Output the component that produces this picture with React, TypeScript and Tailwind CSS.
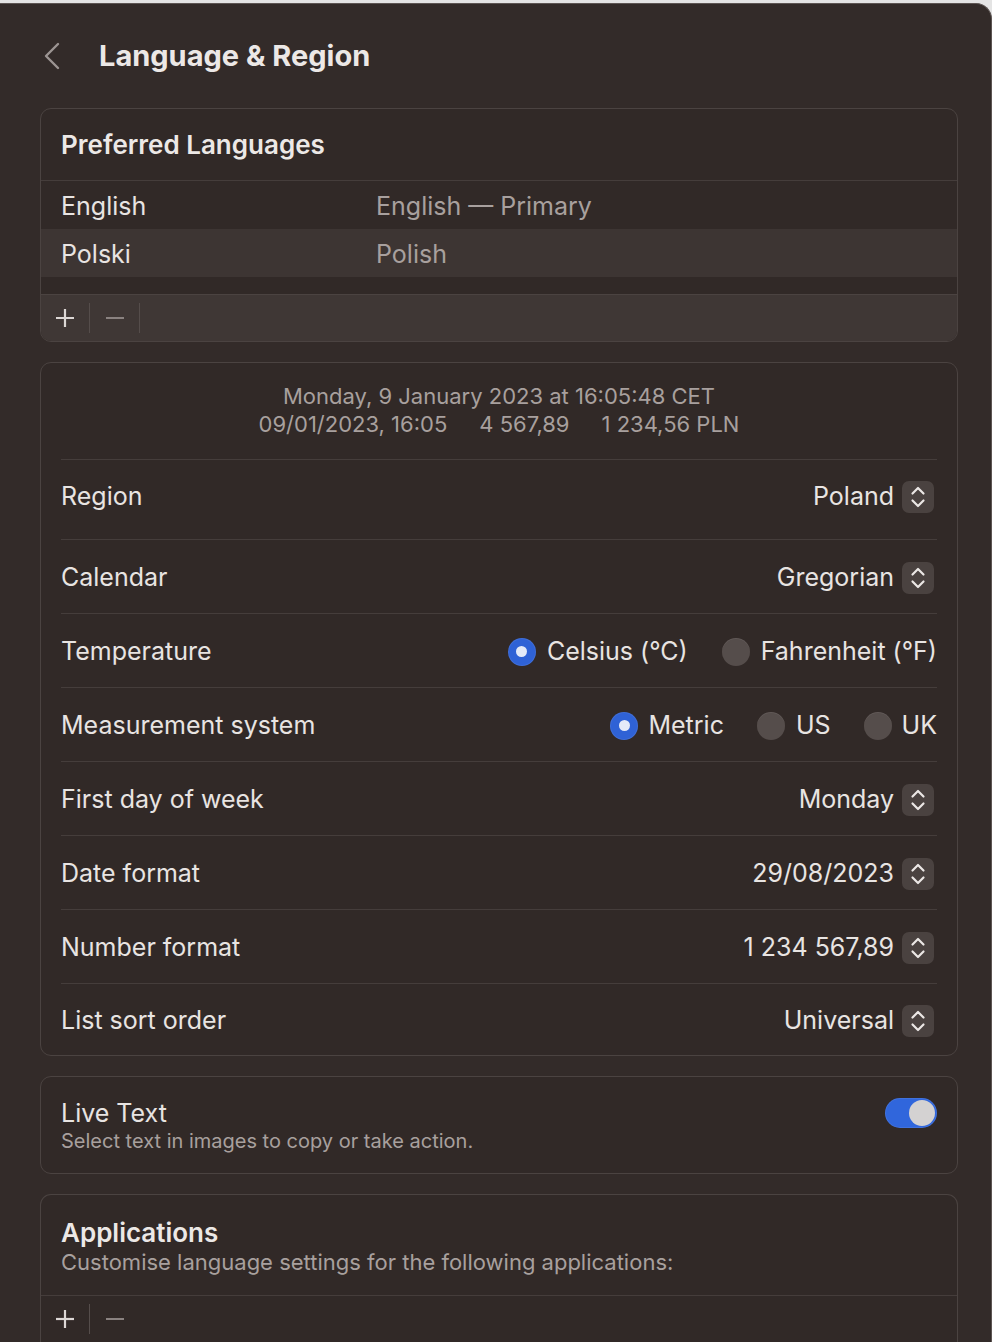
import React from "react";

const font = { fontFamily: "Inter, 'Noto Sans', sans-serif" };

function Stepper() {
  return (
    <div className="flex h-[32px] w-[32px] items-center justify-center rounded-[7px] bg-[#4a4240]">
      <svg width="16" height="26" viewBox="0 0 16 26" fill="none" stroke="#ebe7e5" strokeWidth="2.2" strokeLinecap="round" strokeLinejoin="round" aria-hidden="true">
        <polyline points="2.5 9.5 8 4 13.5 9.5" />
        <polyline points="2.5 16.5 8 22 13.5 16.5" />
      </svg>
    </div>
  );
}

function Radio({ checked }: { checked?: boolean }) {
  return checked ? (
    <span className="flex h-[28px] w-[28px] shrink-0 items-center justify-center rounded-full bg-[#2f62d6] shadow-[inset_0_0_0_1px_rgba(255,255,255,0.08)]">
      <span className="h-[11px] w-[11px] rounded-full bg-[#e4eaf8]" />
    </span>
  ) : (
    <span className="block h-[28px] w-[28px] shrink-0 rounded-full bg-[#554d4b] shadow-[inset_0_1px_0_rgba(255,255,255,0.07)]" />
  );
}

function PlusMinus({ second }: { second?: boolean }) {
  return (
    <div className="flex h-[46px] items-center">
      <button type="button" className="flex h-full w-[48px] items-center justify-center text-[#dcd7d5]">
        <svg width="20" height="20" viewBox="0 0 20 20" stroke="currentColor" strokeWidth="2.2" aria-hidden="true">
          <line x1="10" y1="1" x2="10" y2="19" />
          <line x1="1" y1="10" x2="19" y2="10" />
        </svg>
      </button>
      <div className="h-[30px] w-px bg-[#554d4b]" />
      <button type="button" className="flex h-full w-[49px] items-center justify-center text-[#8a8280]">
        <svg width="20" height="20" viewBox="0 0 20 20" stroke="currentColor" strokeWidth="2" aria-hidden="true">
          <line x1="1" y1="10" x2="19" y2="10" />
        </svg>
      </button>
      {second ? <div className="h-[30px] w-px bg-[#554d4b]" /> : null}
    </div>
  );
}

function SelectRow({ label, value, first }: { label: string; value: string; first?: boolean }) {
  return (
    <div className={`flex items-center justify-between border-t border-[#453d3b] ${first ? "h-[80px] pb-[6px]" : "h-[74px] pt-[2px]"}`}>
      <span className="text-[25px] text-[#e8e4e2]">{label}</span>
      <div className="flex items-center gap-[8px] pr-[3px]">
        <span className="text-[25px] text-[#e8e4e2]">{value}</span>
        <Stepper />
      </div>
    </div>
  );
}

export default function App() {
  return (
    <div className="h-[1342px] w-[992px] overflow-hidden bg-[#e4e4e4] pt-[3px]" style={font}>
      <div className="h-full rounded-tr-[16px] border-t border-r border-[#5d5553] bg-[#332b29] pl-[40px] pr-[33px]">
        {/* header */}
        <div className="flex h-[104px] items-center">
          <svg className="ml-[3px]" width="18" height="30" viewBox="0 0 18 30" fill="none" stroke="#9c9492" strokeWidth="2.4" strokeLinecap="round" strokeLinejoin="round" aria-hidden="true">
            <polyline points="15 3 3 15 15 27" />
          </svg>
          <h1 className="ml-[38px] text-[29px] font-bold text-[#ece8e6]">Language &amp; Region</h1>
        </div>

        {/* preferred languages */}
        <div className="overflow-hidden rounded-[11px] border border-[#4b4341] bg-[#312927]">
          <div className="flex h-[72px] items-center border-b border-[#453d3b] px-[20px]">
            <span className="text-[26px] font-semibold text-[#ece8e6]">Preferred Languages</span>
          </div>
          <div className="flex h-[48px] items-center px-[20px] pt-[3px] text-[25px]">
            <span className="w-[315px] text-[#e8e4e2]">English</span>
            <span className="text-[#a8a09e]">English — Primary</span>
          </div>
          <div className="flex h-[48px] items-center bg-[#3d3533] px-[20px] pt-[3px] text-[25px]">
            <span className="w-[315px] text-[#e8e4e2]">Polski</span>
            <span className="text-[#a8a09e]">Polish</span>
          </div>
          <div className="h-[17px]" />
          <div className="border-t border-[#4b4341] bg-[#3f3735]">
            <PlusMinus second />
          </div>
        </div>

        {/* region settings */}
        <div className="mt-[20px] rounded-[11px] border border-[#4b4341] bg-[#312927] px-[20px]">
          <div className="flex h-[96px] flex-col items-center justify-center pb-[2px] text-[22px] leading-[28px] text-[#a8a09e]">
            <span>Monday, 9 January 2023 at 16:05:48 CET</span>
            <div className="flex gap-[32px]">
              <span>09/01/2023, 16:05</span>
              <span>4 567,89</span>
              <span>1 234,56 PLN</span>
            </div>
          </div>
          <SelectRow first label="Region" value="Poland" />
          <SelectRow label="Calendar" value="Gregorian" />
          <div className="flex h-[74px] items-center justify-between border-t border-[#453d3b] pt-[2px]">
            <span className="text-[25px] text-[#e8e4e2]">Temperature</span>
            <div className="flex items-center text-[25px] text-[#e8e4e2]">
              <Radio checked />
              <span className="ml-[11px]">Celsius (°C)</span>
              <span className="ml-[34px]">
                <Radio />
              </span>
              <span className="ml-[11px]">Fahrenheit (°F)</span>
            </div>
          </div>
          <div className="flex h-[74px] items-center justify-between border-t border-[#453d3b] pt-[2px]">
            <span className="text-[25px] text-[#e8e4e2]">Measurement system</span>
            <div className="flex items-center text-[25px] text-[#e8e4e2]">
              <Radio checked />
              <span className="ml-[10px]">Metric</span>
              <span className="ml-[33px]">
                <Radio />
              </span>
              <span className="ml-[11px]">US</span>
              <span className="ml-[33px]">
                <Radio />
              </span>
              <span className="ml-[10px]">UK</span>
            </div>
          </div>
          <SelectRow label="First day of week" value="Monday" />
          <SelectRow label="Date format" value="29/08/2023" />
          <SelectRow label="Number format" value="1 234 567,89" />
          <div className="flex h-[72px] items-center justify-between border-t border-[#453d3b] pt-[2px]">
            <span className="text-[25px] text-[#e8e4e2]">List sort order</span>
            <div className="flex items-center gap-[8px] pr-[3px]">
              <span className="text-[25px] text-[#e8e4e2]">Universal</span>
              <Stepper />
            </div>
          </div>
        </div>

        {/* live text */}
        <div className="mt-[20px] flex h-[98px] items-start justify-between rounded-[11px] border border-[#4b4341] bg-[#312927] px-[20px] pt-[21px]">
          <div className="flex flex-col">
            <span className="text-[25px] leading-[30px] text-[#e8e4e2]">Live Text</span>
            <span className="text-[20px] leading-[26px] text-[#a8a09e]">Select text in images to copy or take action.</span>
          </div>
          <div className="flex h-[30px] w-[52px] items-center justify-end rounded-full bg-[#3066dc] p-[2px] shadow-[inset_0_0_0_1px_rgba(255,255,255,0.08)]">
            <span className="h-[26px] w-[26px] rounded-full bg-[#d4d2d2]" />
          </div>
        </div>

        {/* applications */}
        <div className="mt-[20px] overflow-hidden rounded-t-[11px] border border-b-0 border-[#4b4341] bg-[#312927]">
          <div className="flex h-[101px] flex-col justify-center border-b border-[#453d3b] px-[20px] pt-[3px]">
            <span className="text-[26px] font-semibold leading-[31px] text-[#ece8e6]">Applications</span>
            <span className="text-[22px] leading-[28px] text-[#a8a09e]">Customise language settings for the following applications:</span>
          </div>
          <PlusMinus />
        </div>
      </div>
    </div>
  );
}
